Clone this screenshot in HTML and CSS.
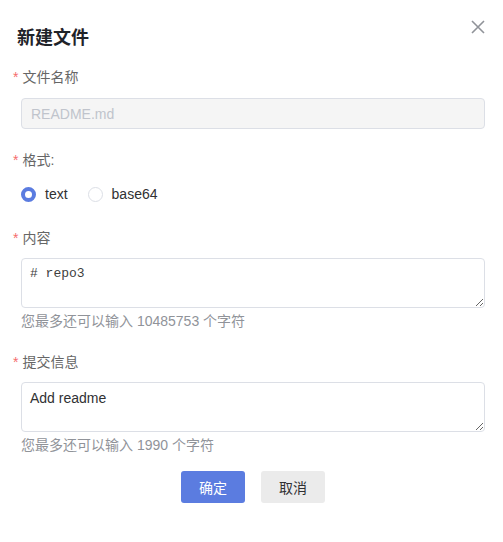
FILE: index.html
```html
<!DOCTYPE html>
<html lang="zh-CN">

<head>
    <meta charset="UTF-8">
    <meta name="viewport" content="width=device-width, initial-scale=1.0">
    <title>新建文件</title>
    <link rel="stylesheet" href="styles.css">
</head>

<body>
    <div class="dialog">
        <div class="dialog-head">
            <span class="dialog-title">新建文件</span>
            <button class="dialog-close" title="关闭">
                <svg width="14" height="14" viewBox="0 0 14 14">
                    <path d="M1 1 L13 13 M13 1 L1 13" stroke="#909399" stroke-width="1.6" fill="none" />
                </svg>
            </button>
        </div>

        <form class="form">
            <div class="form-item item-name">
                <label class="form-label required">文件名称</label>
                <div class="form-control">
                    <input class="input" type="text" value="README.md" disabled>
                </div>
            </div>

            <div class="form-item item-format">
                <label class="form-label required">格式:</label>
                <div class="form-control radios">
                    <label class="radio checked"><span class="radio-dot"></span>text</label>
                    <label class="radio"><span class="radio-dot"></span>base64</label>
                </div>
            </div>

            <div class="form-item item-content">
                <label class="form-label required">内容</label>
                <div class="form-control">
                    <textarea class="textarea mono"># repo3</textarea>
                    <p class="hint">您最多还可以输入 10485753 个字符</p>
                </div>
            </div>

            <div class="form-item item-message">
                <label class="form-label required">提交信息</label>
                <div class="form-control">
                    <textarea class="textarea">Add readme</textarea>
                    <p class="hint">您最多还可以输入 1990 个字符</p>
                </div>
            </div>

            <div class="form-footer">
                <button type="button" class="btn btn-primary">确定</button>
                <button type="button" class="btn btn-default">取消</button>
            </div>
        </form>
    </div>
</body>

</html>
```

FILE: styles.css
```css
* {
    margin: 0;
    padding: 0;
    box-sizing: border-box;
}

html,
body {
    height: 100%;
    background: #fff;
}

body {
    font-family: "Liberation Sans", "Noto Sans CJK SC", sans-serif;
    font-size: 14px;
    color: #303133;
}

.dialog {
    width: 503px;
    padding: 0 18px 0 13px;
}

.dialog-head {
    display: flex;
    justify-content: space-between;
    align-items: flex-start;
    padding-top: 26px;
    height: 50px;
}

.dialog-title {
    margin-left: 4px;
    font-size: 18px;
    font-weight: bold;
    line-height: 24px;
    color: #1f2329;
}

.dialog-close {
    border: none;
    background: none;
    margin-top: -6px;
    width: 14px;
    height: 14px;
    cursor: pointer;
}

.form-item {
    display: flex;
    flex-direction: column;
}

.form-label {
    line-height: 20px;
    color: #666;
}

.required::before {
    content: "*";
    color: #f56c6c;
    margin-right: 4px;
}

.form-control {
    margin-left: 8px;
}

.item-name {
    margin-top: 17px;
}

.item-name .form-label {
    margin-bottom: 11px;
}

.item-format {
    margin-top: 21px;
}

.item-content {
    margin-top: 24px;
}

.item-message {
    margin-top: 21px;
}

.item-content .form-label,
.item-message .form-label {
    margin-bottom: 10px;
}

.input {
    width: 464px;
    height: 31px;
    padding: 0 9px;
    border: 1px solid #dcdfe6;
    border-radius: 4px;
    background: #f5f5f5;
    color: #c0c4cc;
    font: inherit;
}

.radios {
    display: flex;
    align-items: center;
    gap: 20px;
    height: 20px;
    margin-top: 14px;
}

.radio {
    display: flex;
    align-items: center;
    color: #303133;
    cursor: pointer;
}

.radio-dot {
    width: 15px;
    height: 15px;
    border-radius: 50%;
    border: 1px solid #dcdfe6;
    margin-right: 9px;
}

.radio.checked .radio-dot {
    border: 4px solid #5b7ce0;
}

.textarea {
    display: block;
    width: 464px;
    height: 50px;
    padding: 5px 8px;
    border: 1px solid #dcdfe6;
    border-radius: 4px;
    font: inherit;
    color: #303133;
    line-height: 20px;
}

.mono {
    font-family: "Liberation Mono", monospace;
    font-size: 13px;
    color: #404040;
}

.hint {
    line-height: 20px;
    margin-top: 3px;
    color: #909399;
}

.form-footer {
    display: flex;
    justify-content: center;
    gap: 16px;
    margin-top: 16px;
    margin-left: 8px;
}

.btn {
    width: 64px;
    height: 32px;
    border: none;
    border-radius: 3px;
    font: inherit;
    cursor: pointer;
}

.btn-primary {
    background: #5b7ce0;
    color: #fff;
}

.btn-default {
    background: #ebebeb;
    color: #303133;
}
```
